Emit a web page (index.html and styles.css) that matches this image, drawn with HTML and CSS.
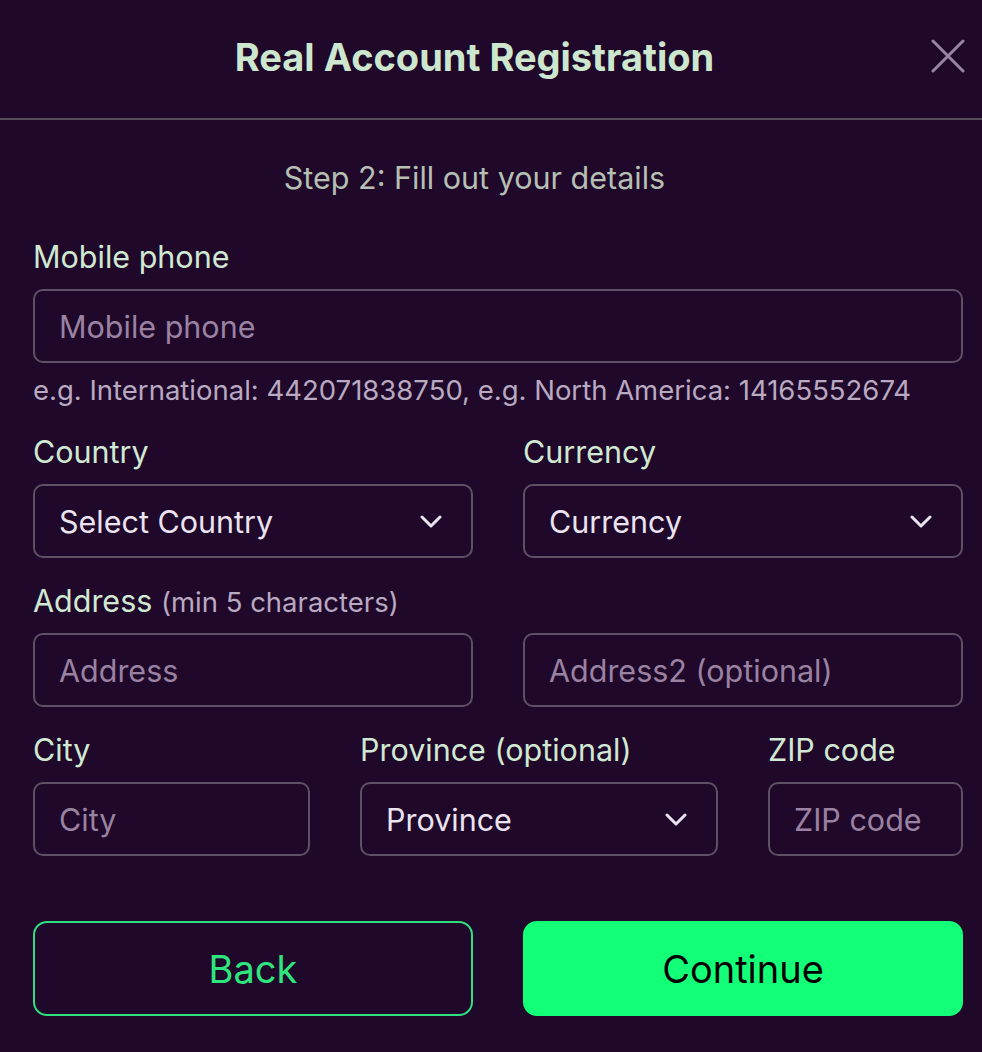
FILE: index.html
```html
<!DOCTYPE HTML>
<html>

<head>
    <link rel="stylesheet" href="styles.css">
</head>

<body>
    <div class="modal">
        <div class="modal-header">
            <h1 class="modal-title">Real Account Registration</h1>
            <button class="close-btn" aria-label="Close">
                <svg width="34" height="34" viewBox="0 0 34 34">
                    <path d="M2 2 L32 32 M32 2 L2 32" stroke="#9a84a6" stroke-width="3" stroke-linecap="round" fill="none" />
                </svg>
            </button>
        </div>

        <p class="step">Step 2: Fill out your details</p>

        <form class="form">
            <div class="field">
                <label class="label">Mobile phone</label>
                <input class="input" type="text" placeholder="Mobile phone">
                <span class="hint">e.g. International: 442071838750, e.g. North America: 14165552674</span>
            </div>

            <div class="row row-2">
                <div class="field">
                    <label class="label">Country</label>
                    <div class="select">
                        <span>Select Country</span>
                        <svg width="22" height="13" viewBox="0 0 22 13"><path d="M2 2 L11 11 L20 2" stroke="#ebe3f0" stroke-width="3" fill="none" stroke-linecap="round" stroke-linejoin="round" /></svg>
                    </div>
                </div>
                <div class="field">
                    <label class="label">Currency</label>
                    <div class="select">
                        <span>Currency</span>
                        <svg width="22" height="13" viewBox="0 0 22 13"><path d="M2 2 L11 11 L20 2" stroke="#ebe3f0" stroke-width="3" fill="none" stroke-linecap="round" stroke-linejoin="round" /></svg>
                    </div>
                </div>
            </div>

            <div class="field">
                <label class="label">Address <span class="muted">(min 5 characters)</span></label>
                <div class="row row-2 inner">
                    <input class="input" type="text" placeholder="Address">
                    <input class="input" type="text" placeholder="Address2 (optional)">
                </div>
            </div>

            <div class="row row-3">
                <div class="field">
                    <label class="label">City</label>
                    <input class="input" type="text" placeholder="City">
                </div>
                <div class="field">
                    <label class="label">Province (optional)</label>
                    <div class="select">
                        <span>Province</span>
                        <svg width="22" height="13" viewBox="0 0 22 13"><path d="M2 2 L11 11 L20 2" stroke="#ebe3f0" stroke-width="3" fill="none" stroke-linecap="round" stroke-linejoin="round" /></svg>
                    </div>
                </div>
                <div class="field">
                    <label class="label">ZIP code</label>
                    <input class="input" type="text" placeholder="ZIP code">
                </div>
            </div>

            <div class="row row-2 actions">
                <button type="button" class="btn btn-back">Back</button>
                <button type="button" class="btn btn-continue">Continue</button>
            </div>
        </form>
    </div>
</body>

</html>
```

FILE: styles.css
```css
body {
    margin: 0;
    background-color: #1f0829;
    font-family: Inter, "Liberation Sans", sans-serif;
}

.modal {
    width: 982px;
    min-height: 1052px;
}

.modal-header {
    position: relative;
    height: 118px;
    padding-right: 33px;
    display: flex;
    align-items: center;
    justify-content: center;
    border-bottom: 2px solid #564c5c;
}

.modal-title {
    margin: 0 0 4px 0;
    font-size: 38px;
    font-weight: 700;
    color: #cde7cf;
}

.close-btn {
    position: absolute;
    top: 39px;
    right: 17px;
    padding: 0;
    border: none;
    background: none;
}

.close-btn svg {
    display: block;
}

.step {
    margin: 38px 0 0 0;
    padding-right: 33px;
    text-align: center;
    font-size: 30.5px;
    line-height: 40px;
    color: #b6bfb3;
}

.form {
    padding: 41px 19px 0 33px;
}

.field {
    display: flex;
    flex-direction: column;
    min-width: 0;
}

.label {
    font-size: 30.5px;
    line-height: 36px;
    color: #d1e8d3;
    margin-bottom: 14px;
}

.muted {
    font-size: 27.5px;
    line-height: 1;
    color: #b9a9c1;
}

.input,
.select {
    box-sizing: border-box;
    height: 74px;
    width: 100%;
    border: 2px solid #5e5165;
    border-radius: 10px;
    background: transparent;
    padding: 0 24px;
    font-family: inherit;
    font-size: 30.5px;
    color: #ebe3f0;
    outline: none;
}

.input::placeholder {
    color: #9a82a2;
}

.select {
    display: flex;
    align-items: center;
    justify-content: space-between;
    padding-right: 29px;
}

.hint {
    margin-top: 10px;
    font-size: 27.5px;
    line-height: 34px;
    color: #b9a9c1;
}

.row {
    display: grid;
    column-gap: 50px;
}

.row-2 {
    grid-template-columns: 1fr 1fr;
}

.row-3 {
    grid-template-columns: 277px 358px 1fr;
}

.form>.row,
.form>.field {
    margin-top: 25px;
}

.form>.field:first-child {
    margin-top: 0;
}

.form>.row-2:nth-child(2) {
    margin-top: 27px;
}

.form>.actions {
    margin-top: 65px;
}

.btn {
    height: 95px;
    border-radius: 14px;
    font-family: inherit;
    font-size: 38px;
    cursor: pointer;
}

.btn-back {
    background: transparent;
    border: 2px solid #2fe07e;
    color: #2fe57e;
}

.btn-continue {
    background: #13ff78;
    border: 2px solid #13ff78;
    color: #000;
}
```
